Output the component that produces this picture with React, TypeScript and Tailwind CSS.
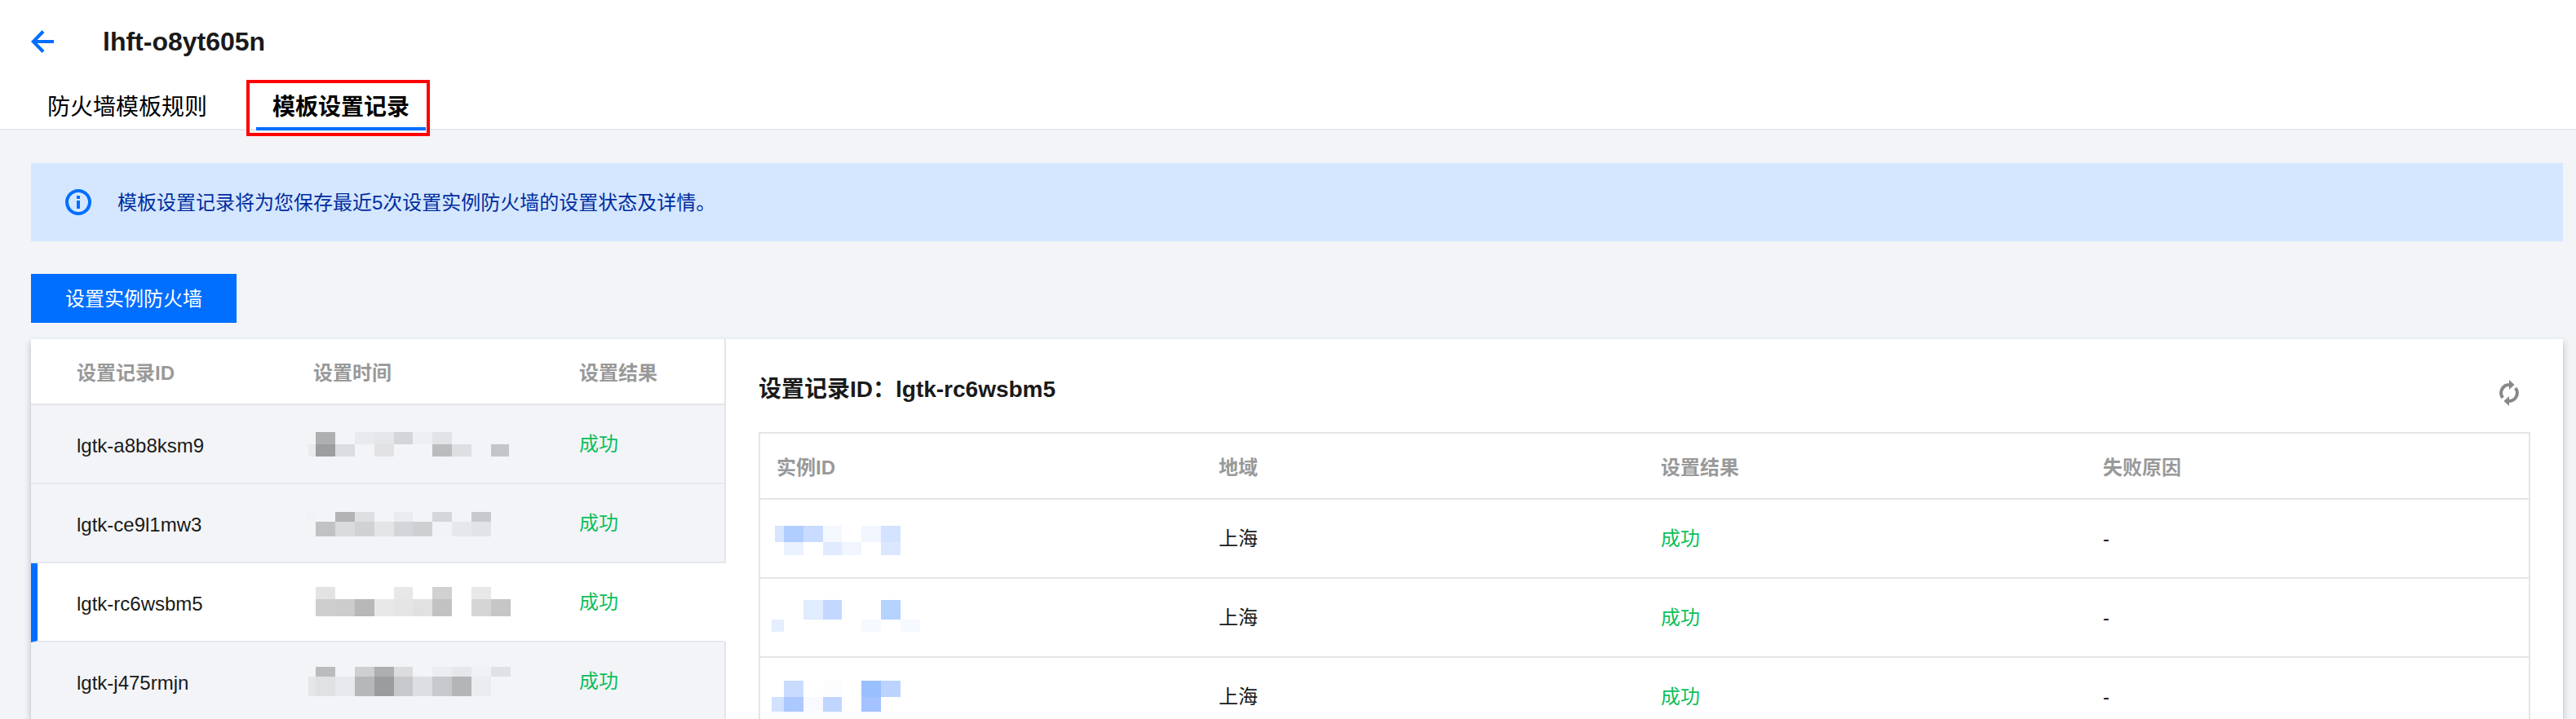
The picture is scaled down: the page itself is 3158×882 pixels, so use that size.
import type { ReactNode } from "react";

type Block = [x: number, y: number, w: number, h: number, fill: string];

function Mosaic({ blocks, label }: { blocks: Block[]; label: string }) {
  return (
    <svg viewBox="0 0 250 48" className="block h-12 w-[250px]" role="img" aria-label={label} shapeRendering="crispEdges">
      {blocks.map(([x, y, w, h, fill], i) => (
        <rect key={i} x={x} y={y} width={w} height={h} fill={fill} />
      ))}
    </svg>
  );
}

const records: { id: string; selected?: boolean; time: Block[] }[] = [
  {
    id: "lgtk-a8b8ksm9",
    time: [
      [11, 9, 24, 15, "#aeafb1"], [59, 9, 24, 15, "#e9eaee"], [83, 9, 24, 15, "#e5e6e9"], [107, 9, 23, 15, "#d4d5d9"],
      [130, 9, 24, 15, "#eeeff3"], [154, 9, 24, 15, "#e2e3e7"],
      [2, 24, 9, 15, "#eaebee"], [11, 24, 24, 15, "#9d9ea0"], [35, 24, 24, 15, "#dbdce0"], [83, 24, 24, 15, "#e2e2e4"],
      [154, 24, 24, 15, "#bbbcbe"], [178, 24, 24, 15, "#dedfe3"], [226, 24, 22, 15, "#c4c5c8"],
    ],
  },
  {
    id: "lgtk-ce9l1mw3",
    time: [
      [0, 10, 11, 12, "#f1f2f6"], [35, 10, 24, 12, "#b3b3b6"], [59, 10, 24, 12, "#dedfe3"], [107, 10, 23, 12, "#eaebef"],
      [154, 10, 24, 12, "#d5d6da"], [202, 10, 24, 12, "#c8c9cd"],
      [11, 22, 24, 18, "#c1c2c4"], [35, 22, 24, 18, "#dadbdd"], [59, 22, 24, 18, "#d1d2d4"], [83, 22, 24, 18, "#e4e5e7"],
      [107, 22, 23, 18, "#d4d5d9"], [130, 22, 24, 18, "#cecfd1"], [154, 22, 24, 18, "#f2f3f7"],
      [178, 22, 24, 18, "#e6e7eb"], [202, 22, 24, 18, "#e2e3e7"],
    ],
  },
  {
    id: "lgtk-rc6wsbm5",
    selected: true,
    time: [
      [11, 5, 24, 15, "#e3e3e3"], [107, 5, 23, 15, "#e8e8e8"], [154, 5, 24, 15, "#d1d1d1"], [202, 5, 24, 15, "#e8e8e8"],
      [11, 20, 24, 21, "#cecece"], [35, 20, 24, 21, "#cccccc"], [59, 20, 24, 21, "#b8b8b8"], [83, 20, 24, 21, "#e8e8e8"],
      [107, 20, 23, 21, "#e5e5e5"], [130, 20, 24, 21, "#e1e1e1"], [154, 20, 24, 21, "#c2c2c2"],
      [202, 20, 24, 21, "#d5d5d5"], [226, 20, 24, 21, "#c6c6c6"],
    ],
  },
  {
    id: "lgtk-j475rmjn",
    time: [
      [11, 6, 24, 12, "#bbbcbe"], [59, 6, 24, 12, "#cecfd1"], [83, 6, 24, 12, "#adaeb0"], [107, 6, 23, 12, "#dcdcde"],
      [154, 6, 24, 12, "#ecedf1"], [178, 6, 24, 12, "#e6e7eb"], [202, 6, 24, 12, "#f0f1f6"], [226, 6, 24, 12, "#e0e1e5"],
      [2, 18, 9, 24, "#e5e6e9"], [11, 18, 24, 24, "#e0e1e2"], [35, 18, 24, 24, "#e8e9ed"], [59, 18, 24, 24, "#b6b7b9"],
      [83, 18, 24, 24, "#9b9c9e"], [107, 18, 23, 24, "#c7c8cc"], [130, 18, 24, 24, "#dddee2"],
      [154, 18, 24, 24, "#c8c9cd"], [178, 18, 24, 24, "#b4b5b7"], [202, 18, 24, 24, "#ebecf0"],
    ],
  },
];

const instances: { region: string; reason: string; id: Block[] }[] = [
  {
    region: "上海",
    reason: "-",
    id: [
      [4, 8, 11, 20, "#d7e5ff"], [15, 8, 24, 20, "#b0ceff"], [39, 8, 24, 20, "#c9dcff"], [63, 8, 23, 20, "#f5f8ff"],
      [110, 8, 24, 20, "#f1f6ff"], [134, 8, 24, 20, "#d3e3ff"],
      [15, 28, 24, 16, "#eaf1ff"], [63, 28, 23, 16, "#e0ebff"], [86, 28, 24, 16, "#f1f5ff"], [134, 28, 24, 16, "#dbe7ff"],
    ],
  },
  {
    region: "上海",
    reason: "-",
    id: [
      [39, 2, 24, 24, "#e0ecff"], [63, 2, 23, 24, "#c4d8ff"], [134, 2, 24, 24, "#b6d2ff"],
      [0, 26, 15, 15, "#e4eeff"], [110, 26, 24, 15, "#f6f9ff"], [158, 26, 24, 15, "#f6f9ff"],
    ],
  },
  {
    region: "上海",
    reason: "-",
    id: [
      [15, 4, 24, 20, "#c9dcff"], [63, 4, 23, 20, "#fcfdff"], [110, 4, 24, 20, "#99bfff"], [134, 4, 24, 20, "#bcd3ff"],
      [0, 24, 15, 18, "#d1e2ff"], [15, 24, 24, 18, "#abc8ff"], [39, 24, 24, 18, "#f8faff"], [63, 24, 23, 18, "#c1d6ff"],
      [110, 24, 24, 18, "#a3c2ff"],
    ],
  },
];

function BackIcon() {
  return (
    <svg viewBox="0 0 28 28" className="size-7" fill="none" stroke="currentColor" strokeWidth="4" aria-hidden="true">
      <path d="M28 14H3M15 1.500 2.800 14 15 26.500" />
    </svg>
  );
}

function InfoIcon() {
  return (
    <svg viewBox="0 0 32 32" className="size-8 shrink-0 text-[#006eff]" fill="currentColor" aria-hidden="true">
      <circle cx="16" cy="16" r="14" fill="none" stroke="currentColor" strokeWidth="4" />
      <path d="M14 8h4v4h-4zM14 14h4v10h-4z" />
    </svg>
  );
}

function RefreshIcon() {
  return (
    <svg viewBox="0 0 24 32" className="h-8 w-6" fill="none" stroke="currentColor" strokeWidth="4" aria-hidden="true">
      <path d="M4.200 22A10 10 0 0 1 12.500 6" />
      <path d="M19.800 10A10 10 0 0 1 11.500 26" />
      <path d="M12 0l6.500 6-6.500 6zM12 32l-6.500-6 6.500-6z" fill="currentColor" stroke="none" />
    </svg>
  );
}

function Th({ children, className = "pl-5" }: { children: ReactNode; className?: string }) {
  return <th scope="col" className={`h-[81px] border-b-2 border-[#e5e5e5] pt-1 text-left font-bold text-[#999999] ${className}`}>{children}</th>;
}

export default function App() {
  return (
    <div className="flex h-screen flex-col overflow-hidden bg-[#f2f4f8] font-['Liberation_Sans','Noto_Sans_CJK_SC',sans-serif] text-2xl leading-8 text-[#1a1a1a]">
      <header className="shrink-0 border-b-2 border-[#e5e8ed] bg-white px-[38px]">
        <div className="flex h-[98px] items-center gap-[60px] pt-1">
          <a href="#back" aria-label="返回" className="text-[#006eff]">
            <BackIcon />
          </a>
          <h1 className="text-[32px] leading-10 font-bold">lhft-o8yt605n</h1>
        </div>
        <nav className="flex h-[60px] gap-10 text-[28px] text-black">
          <a href="#rules" className="px-5 pt-[18px]">防火墙模板规则</a>
          <a href="#records" aria-current="page" className="relative -mb-0.5 border-b-4 border-[#006eff] px-5 pt-[18px] font-bold">
            模板设置记录
            <span className="pointer-events-none absolute top-0 -right-[5px] -bottom-[11px] -left-3 border-4 border-[#ff0000]" />
          </a>
        </nav>
      </header>

      <main className="flex min-h-0 grow flex-col pt-10 pr-4 pl-[38px]">
        <div className="flex h-24 shrink-0 items-center gap-8 bg-[#d5e7ff] px-[42px] text-[#002da0]">
          <InfoIcon />
          <p className="pt-0.5">模板设置记录将为您保存最近5次设置实例防火墙的设置状态及详情。</p>
        </div>

        <button type="button" className="mt-10 mb-5 h-[60px] shrink-0 self-start bg-[#006eff] px-[42px] pt-0.5 text-white">
          设置实例防火墙
        </button>

        <div className="flex min-h-0 grow bg-white shadow-[0_4px_8px_rgba(54,58,80,0.32)]">
          <section className="w-[852px] shrink-0">
            <table className="w-full table-fixed border-separate border-spacing-0">
              <thead>
                <tr>
                  <Th className="w-[326px] pl-14">设置记录ID</Th>
                  <Th>设置时间</Th>
                  <Th className="w-[200px] border-r-2 pl-5">设置结果</Th>
                </tr>
              </thead>
              <tbody>
                {records.map((r) => (
                  <tr key={r.id} className={r.selected ? "bg-white" : "bg-[#f2f4f8]"}>
                    <td className={`h-[97px] border-b-2 border-b-[#e5e8ed] pt-1 ${r.selected ? "border-l-8 border-l-[#006eff] pl-12" : "pl-14"}`}>
                      {r.id}
                    </td>
                    <td className="border-b-2 border-[#e5e8ed] pl-3">
                      <Mosaic blocks={r.time} label="设置时间" />
                    </td>
                    <td className={`border-r-2 border-b-2 border-b-[#e5e8ed] pl-5 text-[#0abf5b] ${r.selected ? "border-r-white" : "border-r-[#e5e5e5]"}`}>
                      成功
                    </td>
                  </tr>
                ))}
              </tbody>
            </table>
          </section>

          <section className="min-w-0 grow px-10 pt-[46px]">
            <div className="flex h-[68px] items-start justify-between pr-[14px]">
              <h2 className="text-[28px] font-bold">设置记录ID：lgtk-rc6wsbm5</h2>
              <button type="button" aria-label="刷新" className="mt-1 text-[#888888]">
                <RefreshIcon />
              </button>
            </div>
            <table className="w-full table-fixed border-separate border-spacing-0 border-2 border-[#e5e5e5]">
              <thead>
                <tr>
                  <Th>实例ID</Th>
                  <Th>地域</Th>
                  <Th>设置结果</Th>
                  <Th>失败原因</Th>
                </tr>
              </thead>
              <tbody>
                {instances.map((row, i) => (
                  <tr key={i}>
                    <td className="h-[97px] border-b-2 border-[#e5e5e5] pl-3.5">
                      <Mosaic blocks={row.id} label="实例ID" />
                    </td>
                    <td className="border-b-2 border-[#e5e5e5] pl-5">{row.region}</td>
                    <td className="border-b-2 border-[#e5e5e5] pl-5 text-[#0abf5b]">成功</td>
                    <td className="border-b-2 border-[#e5e5e5] pl-5">{row.reason}</td>
                  </tr>
                ))}
              </tbody>
            </table>
          </section>
        </div>
      </main>
    </div>
  );
}
